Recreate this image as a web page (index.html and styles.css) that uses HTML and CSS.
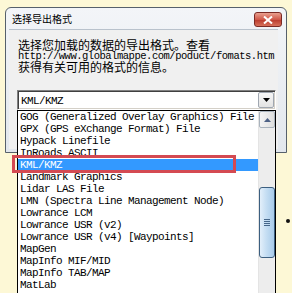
FILE: index.html
```html
<!DOCTYPE html>
<html>
<head>
<meta charset="utf-8">
<link rel="stylesheet" href="styles.css">
</head>
<body>
<div class="screen">
  <div class="window">
    <div class="titlebar">
      <span class="title">选择导出格式</span>
      <span class="close">
        <svg width="10" height="8" viewBox="0 0 10 8"><path d="M1 0.5 L9 7.5 M9 0.5 L1 7.5" stroke="#fff" stroke-width="2"/></svg>
      </span>
    </div>
    <div class="client">
      <div class="msg">
        <div class="l1">选择您加载的数据的导出格式。查看</div>
        <div class="url">http://www.globalmappe.com/poduct/fomats.htm</div>
        <div class="l3">获得有关可用的格式的信息。</div>
      </div>
      <div class="combo">
        <span class="value">KML/KMZ</span>
        <span class="btn"><svg width="7" height="4" viewBox="0 0 7 4"><path d="M0 0 H7 L3.5 4 Z" fill="#000"/></svg></span>
      </div>
    </div>
  </div>

  <div class="dropdown">
    <ul class="items">
      <li>GOG (Generalized Overlay Graphics) File</li>
      <li>GPX (GPS eXchange Format) File</li>
      <li>Hypack Linefile</li>
      <li>InRoads ASCII</li>
      <li class="sel">KML/KMZ</li>
      <li>Landmark Graphics</li>
      <li>Lidar LAS File</li>
      <li>LMN (Spectra Line Management Node)</li>
      <li>Lowrance LCM</li>
      <li>Lowrance USR (v2)</li>
      <li>Lowrance USR (v4) [Waypoints]</li>
      <li>MapGen</li>
      <li>MapInfo MIF/MID</li>
      <li>MapInfo TAB/MAP</li>
      <li>MatLab</li>
    </ul>
    <div class="scrollbar">
      <div class="up"><svg width="7" height="4" viewBox="0 0 7 4"><path d="M0 4 H7 L3.5 0 Z" fill="#4d6185"/></svg></div>
      <div class="track">
        <div class="thumb"><span class="grip"></span></div>
      </div>
    </div>
  </div>

  <div class="annot"></div>
  <div class="bullet"></div>
</div>
</body>
</html>
```

FILE: styles.css
```css
html, body {
  margin: 0;
  padding: 0;
}
body {
  background: #fdf7d2;
  overflow: hidden;
}
.screen {
  position: relative;
  width: 292px;
  height: 293px;
  overflow: hidden;
  background: #fdf8d6;
  padding-top: 7px;
  box-sizing: border-box;
}
.window {
  margin-left: 5px;
  width: 282px;
  height: 146px;
  box-sizing: border-box;
  border: 1px solid #56606b;
  border-radius: 6px 6px 0 0;
  background: linear-gradient(#f3f5f8, #e2e7ed);
  display: flex;
  flex-direction: column;
}
.titlebar {
  height: 21px;
  display: flex;
  align-items: center;
  justify-content: space-between;
  padding: 0 4px 0 6px;
}
.title {
  font-family: "Noto Sans CJK SC", sans-serif;
  font-size: 10px;
  line-height: 12px;
  color: #000;
}
.close {
  width: 28px;
  height: 15px;
  box-sizing: border-box;
  border: 1px solid #7a2a25;
  border-radius: 3px;
  background: linear-gradient(#e9a08f, #d0594a 50%, #b9392b 51%, #d6705a);
  display: flex;
  align-items: center;
  justify-content: center;
  margin-top: 2px;
}
.close svg { display: block; }
.client {
  margin: 0 8px 3px 3px;
  flex: 1;
  background: #f0f0f0;
  border-top: 1px solid #b9c2cc;
  padding: 9px 0 0 0;
  box-sizing: border-box;
}
.msg {
  padding-left: 9px;
  color: #000;
}
.l1, .l3 {
  font-family: "Noto Sans CJK SC", sans-serif;
  font-size: 12px;
  line-height: 12px;
  height: 12px;
  white-space: nowrap;
}
.url {
  font-family: "Liberation Mono", monospace;
  font-size: 10.5px;
  letter-spacing: -0.48px;
  line-height: 9px;
  height: 9px;
  margin-top: 1px;
  white-space: nowrap;
}
.combo {
  margin: 17px 0 0 8px;
  width: 259px;
  height: 20px;
  box-sizing: border-box;
  border-top: 1px solid #808080;
  border-left: 1px solid #808080;
  border-right: 1px solid #ffffff;
  border-bottom: 1px solid #ffffff;
  box-shadow: inset 1px 1px 0 #404040, inset -1px -1px 0 #d4d0c8;
  background: #fff;
  display: flex;
  align-items: stretch;
  padding: 1px;
}
.value {
  flex: 1;
  font-family: "Liberation Mono", monospace;
  font-size: 11px;
  letter-spacing: -0.6px;
  line-height: 16px;
  padding: 1px 0 0 2px;
  color: #000;
}
.btn {
  width: 16px;
  box-sizing: border-box;
  border: 1px solid #a0a7b1;
  border-radius: 2px;
  background: linear-gradient(#f7f7f7, #e3e3e3);
  display: flex;
  align-items: center;
  justify-content: center;
}
.btn svg { display: block; }

.dropdown {
  position: absolute;
  left: 17px;
  top: 110px;
  width: 259px;
  height: 200px;
  box-sizing: border-box;
  border: 1px solid #000;
  background: #fff;
  display: flex;
}
.items {
  list-style: none;
  margin: 0;
  padding: 0;
  flex: 1;
  overflow: hidden;
}
.items li {
  font-family: "Liberation Mono", monospace;
  font-size: 11px;
  letter-spacing: -0.6px;
  line-height: 12px;
  height: 12px;
  padding-left: 2px;
  white-space: nowrap;
  color: #000;
}
.items li.sel {
  background: #3399ff;
  color: #fff;
}
.scrollbar {
  width: 17px;
  background: #ededed;
  display: flex;
  flex-direction: column;
  border-left: 1px solid #e4e4e4;
  box-sizing: border-box;
}
.up {
  height: 17px;
  box-sizing: border-box;
  border: 1px solid #a9b3bd;
  border-radius: 2px;
  background: linear-gradient(90deg, #f4f4f4, #dedede);
  display: flex;
  align-items: center;
  justify-content: center;
}
.up svg { display: block; }
.track {
  flex: 1;
  padding-top: 59px;
}
.thumb {
  height: 71px;
  box-sizing: border-box;
  border: 1px solid #3c5f80;
  border-radius: 3px;
  background: linear-gradient(90deg, #e3effa, #c2dcf2 50%, #a9cbea);
  display: flex;
  align-items: center;
  justify-content: center;
}
.grip {
  width: 6px;
  height: 7px;
  background: repeating-linear-gradient(#46678a 0 1px, transparent 1px 2px);
}
.annot {
  position: absolute;
  left: 12px;
  top: 155px;
  width: 224px;
  height: 18px;
  box-sizing: border-box;
  border: 3px solid #d44a52;
}
.bullet {
  position: absolute;
  left: 286px;
  top: 219px;
  width: 4px;
  height: 4px;
  border-radius: 50%;
  background: #111;
}
```
